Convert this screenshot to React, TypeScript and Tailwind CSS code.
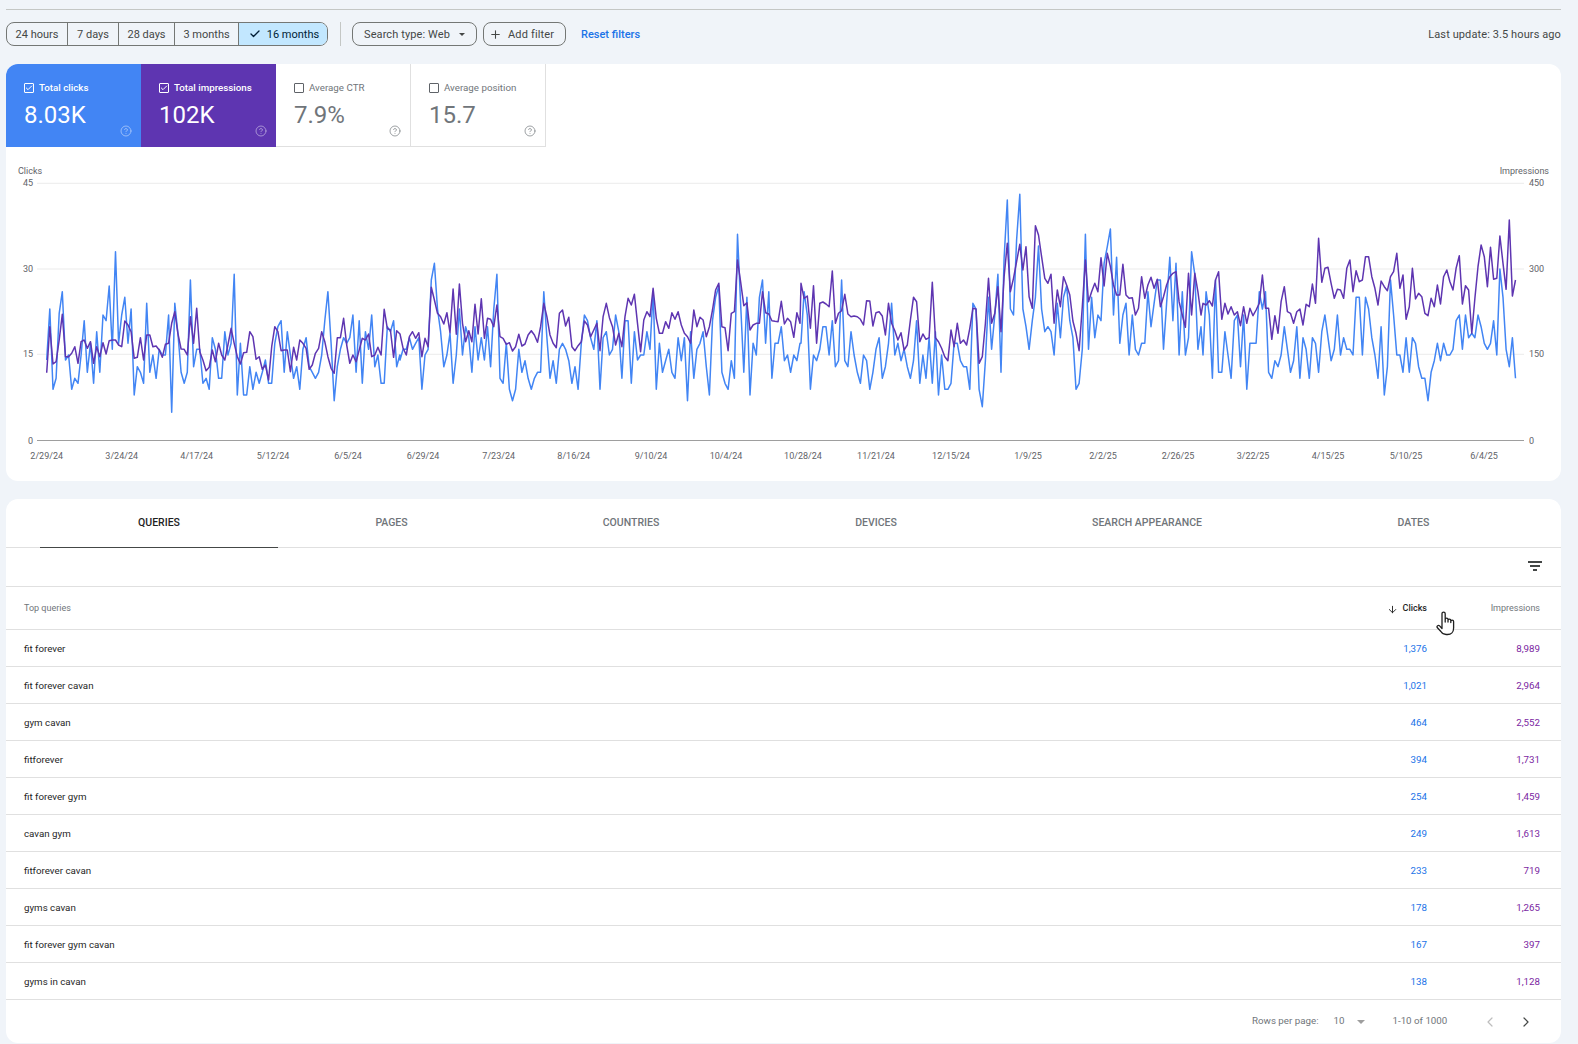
import { Check, ChevronLeft, ChevronRight, CircleHelp, Plus, ArrowDown } from "lucide-react";

const RANGES = ["24 hours", "7 days", "28 days", "3 months"];

const RANGE_WIDTHS = ["w-[61px]", "w-[51px]", "w-[56px]", "w-[64px]"];

const METRICS = [
  { label: "Total clicks", value: "8.03K", bg: "bg-[#4285f4]", active: true },
  { label: "Total impressions", value: "102K", bg: "bg-[#5e35b1]", active: true },
  { label: "Average CTR", value: "7.9%", bg: "bg-white", active: false },
  { label: "Average position", value: "15.7", bg: "bg-white", active: false },
];

const TABS = [
  { label: "QUERIES", width: "w-[238px]" },
  { label: "PAGES", width: "w-[227px]" },
  { label: "COUNTRIES", width: "w-[252px]" },
  { label: "DEVICES", width: "w-[238px]" },
  { label: "SEARCH APPEARANCE", width: "w-[304px]" },
  { label: "DATES", width: "w-[229px]" },
];

const ROWS = [
  ["fit forever", "1,376", "8,989"],
  ["fit forever cavan", "1,021", "2,964"],
  ["gym cavan", "464", "2,552"],
  ["fitforever", "394", "1,731"],
  ["fit forever gym", "254", "1,459"],
  ["cavan gym", "249", "1,613"],
  ["fitforever cavan", "233", "719"],
  ["gyms cavan", "178", "1,265"],
  ["fit forever gym cavan", "167", "397"],
  ["gyms in cavan", "138", "1,128"],
];

const X_LABELS: [string, number][] = [
  ["2/29/24", 46.7], ["3/24/24", 121.7], ["4/17/24", 196.7], ["5/12/24", 273], ["6/5/24", 348],
  ["6/29/24", 423], ["7/23/24", 498.7], ["8/16/24", 573.7], ["9/10/24", 651], ["10/4/24", 726],
  ["10/28/24", 803], ["11/21/24", 876], ["12/15/24", 951], ["1/9/25", 1028], ["2/2/25", 1103],
  ["2/26/25", 1178], ["3/22/25", 1253], ["4/15/25", 1328], ["5/10/25", 1406], ["6/4/25", 1484],
];

const GRID: [number, string, string][] = [
  [183.3, "45", "450"],
  [269, "30", "300"],
  [354.3, "15", "150"],
];

const DAY_STEP = 3.125;

// chart heights, one value per day, 3 units per pixel from y=160. each block restarts at its x
const CLICKS: [number, number[]][] = [
  [46.7, [600,447,688,655,460,395,600,585,688,655,670,585,482,637,550,670,515,637,465,482,378,568,275,550,465,412,550,447,705,620,637,670,430,637,585,655,568,585,585,465,757,430,520,637,670,637,360,620,568,568,670,655,688,533,568,655,655,515,585,550,343,705,550,705,705,620,688,637,670,637,600,670,670,550,500,482,637,515,585,655,620,688,568,533,620,637,655,637,585,482,395,550,722,620,568,533,550,533,465,637,482,670,515,568,465,620,585,670,670,500,515,482,620,585]],
  [400, [600,568,568,533,568,550,533,688,585,568,360,310,447,515,620,585,520,670,585,447,585,500,533,637,500,600,533,600,500,620,447,343,655,670,550,688,722,688,568,637,602,655,688,655,637,637,395,533,655,602,670,568,550,568,602,670,620,688,550,465,482,533,568,482,688,533,515,585,568,465,515,655,482,482,670,515,600,585,585,515,568,395,688,550,637,602,568,637,655,533,602,533,722,515,655,568,550,515,620,705,482,412,378,637,670,688,602,655,223,430,637,412,705,550,585,412,360,550,395,655,550,550,500,602,585,637,585,602,550]],
  [801, [550,395,465,688,585,602,568,500,500,585,482,620,602,360,602,620,515,585,637,670,585,602,688,637,568,533,655,620,550,430,585,550,602,568,620,655,602,482,670,585,655,533,670,515,705,585,688,688,670,550,550,602,620,620,688,430,447,688,740,602,412,568,465,343,637,295,120,447,465,240,103,447,500,568,482,412,258,447,515,500,515,585,430,533,412,378,482,533,688,670,568,223,568,412,533,465,482,310,260,207,465,292,550,465,430,585,465,568,585,550,550,395,500,430,360,360,568,430,292,482,310,585,395,585,533,275,343,568,500]],
  [1203, [585,395,465,655,360,637,637,515,585,655,482,465,620,465,688,550,550,550,395,447,395,637,655,602,620,585,500,568,637,602,500,655,533,568,655,533,550,637,515,465,533,602,568,465,585,533,568,568,585,412,412,585,412,447,533,585,655,500,705,620,360,465,585,585,637,533,637,533,550,620,655,655,722,637,602,550,602,550,585,585,568,482,465,568,465,533,520,533,465,500,550,568,550,482,585,327,412,568,620,533,655]],
];

const IMPRESSIONS: [number, number[]][] = [
  [46.7, [638,500,612,605,540,463,590,590,580,560,610,545,540,565,545,610,560,590,548,582,542,540,540,555,560,483,495,515,595,592,533,600,525,525,560,558,570,592,553,550,490,455,520,567,568,585,470,550,445,575,600,632,622,570,605,550,585,600,555,505,550,590,612,578,577,515,530,598,590,628,615,660,560,500,515,572,570,570,635,562,600,540,550,565,628,615,580,565,515,545,590,625,640,533,533,475,555,610,585,605,570,535,540,522,590,585,562,585,448,505,510,592,512]],
  [400, [522,565,585,530,515,535,518,590,535,560,382,420,460,470,492,458,518,387,523,372,490,545,512,545,433,522,416,535,475,478,500,435,530,535,553,548,573,560,523,558,552,525,512,525,547,500,430,470,525,550,563,460,450,498,472,560,572,557,545,483,495,530,510,490,572,470,430,473,500,555,520,560,470,415,435,403,490,575,480,455,470,385,475,520,520,485,505,458,478,455,495,520,530,550,450,500,472,480,530,500,450,390,370,500,503,572,460,455,300,365,437,428,510,495,490,490,395,458,462,482,484,485,424,492,475,485,532,458,490]],
  [801, [370,415,408,505,377,550,430,426,432,440,333,490,460,452,403,462,470,468,470,478,495,422,423,498,458,455,468,525,430,490,512,540,518,570,555,480,412,425,545,522,538,533,367,533,545,565,590,602,510,560,490,550,540,555,505,445,447,610,590,490,355,490,460,380,515,350,250,395,355,305,253,330,260,410,445,197,225,290,355,370,343,490,390,440,350,375,405,483,520,572,440,300,425,395,370,395,293,378,280,320,375,405,405,313,405,415,413,465,445,350,415,375,352,385,358,440,410,375,350,340,335,425,465,502,340,465,340,395,465]],
  [1203, [430,435,422,438,360,335,478,430,462,440,465,455,497,440,490,445,467,450,430,345,445,445,538,467,520,425,380,455,460,490,455,447,495,433,440,372,430,235,367,325,322,370,415,388,390,415,325,300,395,332,365,360,290,290,350,385,435,363,380,392,350,335,280,385,345,478,440,325,417,400,410,460,467,415,440,375,432,350,330,365,390,325,287,432,377,390,520,415,320,255,290,380,262,358,355,228,310,388,180,408,360]],
];

function toPoints(blocks: [number, number[]][]) {
  return blocks
    .flatMap(([start, ys]) =>
      ys.map((y, i) => `${(start + i * DAY_STEP).toFixed(1)},${(160 + y / 3).toFixed(1)}`),
    )
    .join(" ");
}

function Chart() {
  return (
    <svg viewBox="6 147 1555 334" className="block h-[334px] w-[1555px]">
      <g fontSize="9" fill="#5f6368">
        <text x="18" y="174">Clicks</text>
        <text x="1549" y="174" textAnchor="end">Impressions</text>
        <text x="33" y="444" textAnchor="end">0</text>
        <text x="1529" y="444">0</text>
        {GRID.map(([y, left, right]) => (
          <g key={left}>
            <line x1="37" x2="1524" y1={y} y2={y} stroke="#ebebeb" />
            <text x="33" y={y + 3} textAnchor="end">{left}</text>
            <text x="1529" y={y + 3}>{right}</text>
          </g>
        ))}
        {X_LABELS.map(([label, x]) => (
          <text key={label} x={x} y="459" textAnchor="middle">{label}</text>
        ))}
      </g>
      <line x1="37" x2="1524" y1="440.5" y2="440.5" stroke="#9e9e9e" />
      <polyline points={toPoints(CLICKS)} fill="none" stroke="#4285f4" strokeWidth="1.5" strokeLinejoin="round" />
      <polyline points={toPoints(IMPRESSIONS)} fill="none" stroke="#5e35b1" strokeWidth="1.5" strokeLinejoin="round" />
    </svg>
  );
}

function Metric({ label, value, bg, active }: (typeof METRICS)[number]) {
  return (
    <div
      className={`h-[83px] w-[135px] pl-[18px] pt-[19px] ${bg} ${
        active ? "text-white" : "border-r border-b border-[#e0e0e0] text-[#70757a]"
      }`}
    >
      <div className="flex h-[10px] items-center gap-[5px]">
        <span
          className={`flex h-[10px] w-[10px] items-center justify-center rounded-[1px] border ${
            active ? "border-white" : "border-[#5f6368]"
          }`}
        >
          {active && <Check size={8} strokeWidth={3} />}
        </span>
        <span className={`text-[9.75px] ${active ? "font-medium" : ""}`}>{label}</span>
      </div>
      <div className="mt-[8px] flex h-[36px] justify-between pr-[9px]">
        <span className="text-[24px] leading-[28px]">{value}</span>
        <CircleHelp size={12} strokeWidth={1.5} className={`self-end ${active ? "opacity-60" : "opacity-90"}`} />
      </div>
    </div>
  );
}

export default function App() {
  return (
    <div className="h-[1044px] w-[1578px] overflow-hidden bg-[#f0f4f9] pl-[6px] pr-[17px] [font-family:Roboto,sans-serif]">
      <div className="h-[10px] border-b border-[#c4c7c5]" />

      <div className="mt-[12px] flex h-[24px] items-center text-[11px] text-[#444746]">
        <div className="flex h-full overflow-hidden rounded-[8px] border border-[#747775]">
          {RANGES.map((r, i) => (
            <div key={r} className={`flex items-center justify-center border-r border-[#747775] pt-[2px] ${RANGE_WIDTHS[i]}`}>
              {r}
            </div>
          ))}
          <div className="flex w-[88px] items-center justify-center gap-[6px] bg-[#c2e7ff] pl-[2px] text-[#001d35]">
            <Check size={12} strokeWidth={2.6} />
            <span className="pt-[2px]">16 months</span>
          </div>
        </div>
        <div className="ml-[12px] h-full w-px bg-[#c4c7c5]" />
        <div className="ml-[11px] flex h-full w-[125px] items-center rounded-[8px] border border-[#747775] pl-[11px]">
          <span className="pt-[2px] tracking-[0.1px]">Search type: Web</span>
          <span className="ml-[9px] h-0 w-0 border-x-[3px] border-t-[3px] border-x-transparent border-t-[#444746]" />
        </div>
        <div className="ml-[6px] flex h-full w-[83px] items-center gap-[6px] rounded-[8px] border border-[#747775] pl-[5px]">
          <Plus size={13} strokeWidth={2} />
          <span className="pt-[2px] tracking-[0.15px]">Add filter</span>
        </div>
        <span className="ml-[15px] pt-[2px] font-medium text-[#1a73e8]">Reset filters</span>
        <span className="ml-auto pt-[2px] tracking-[0.1px]">Last update: 3.5 hours ago</span>
      </div>

      <div className="mt-[18px] h-[417px] overflow-hidden rounded-xl bg-white">
        <div className="flex">
          {METRICS.map((m) => (
            <Metric key={m.label} {...m} />
          ))}
        </div>
        <Chart />
      </div>

      <div className="relative mt-[18px] h-[544px] overflow-hidden rounded-xl bg-white text-[9.75px] text-[#1f1f1f]">
        <div className="flex h-[49px] border-b border-[#e0e0e0] pl-[34px] text-[10.5px] font-medium text-[#70757a]">
          {TABS.map((t, i) => (
            <div
              key={t.label}
              className={`flex h-[48px] items-center justify-center ${t.width} ${
                i === 0 ? "h-[49px] border-b border-[#444746] text-[#1f1f1f]" : ""
              }`}
            >
              {t.label}
            </div>
          ))}
        </div>

        <div className="flex h-[39px] items-center justify-end border-b border-[#e0e0e0] pb-[3px] pr-[19px]">
          <svg viewBox="0 0 14 10" className="h-[10px] w-[14px]" fill="#444746">
            <rect width="14" height="2" />
            <rect x="2" y="4" width="10" height="2" />
            <rect x="5" y="8" width="4" height="2" />
          </svg>
        </div>

        <div className="flex h-[43px] items-center border-b border-[#e0e0e0] pl-[18px] pr-[21px] pt-[2px] text-[9px] text-[#70757a]">
          <span className="flex-1">Top queries</span>
          <span className="flex w-[60px] items-center justify-end gap-[5px] font-medium text-[#1f1f1f]">
            <ArrowDown size={11} strokeWidth={2} />
            Clicks
          </span>
          <span className="w-[113px] text-right">Impressions</span>
        </div>

        {ROWS.map(([query, clicks, impressions]) => (
          <div key={query} className="flex h-[37px] items-center border-b border-[#e0e0e0] pl-[18px] pr-[21px] pt-[2px]">
            <span className="flex-1">{query}</span>
            <span className="w-[60px] text-right text-[#1a73e8]">{clicks}</span>
            <span className="w-[113px] text-right text-[#7b1fa2]">{impressions}</span>
          </div>
        ))}

        <div className="flex h-[43px] items-center text-[#70757a]">
          <span className="ml-[1246px]">Rows per page:</span>
          <span className="ml-[15px]">10</span>
          <span className="ml-[13px] h-0 w-0 border-x-[4px] border-t-[4px] border-x-transparent border-t-[#9e9e9e]" />
          <span className="ml-[27px]">1-10 of 1000</span>
          <ChevronLeft size={16} strokeWidth={1.8} className="ml-[35px] text-[#bdbdbd]" />
          <ChevronRight size={16} strokeWidth={1.8} className="ml-[20px] text-[#444746]" />
        </div>

        <svg viewBox="0 0 20 25" className="absolute left-[1430px] top-[112px] h-[25px] w-[20px]" fill="white" stroke="#1f1f1f" strokeWidth="1.3">
          <path d="M6 17.5V2.7a1.6 1.6 0 0 1 3.2 0V11V8.5a1.4 1.4 0 0 1 2.8 0V11V9.5a1.4 1.4 0 0 1 2.8 0V11.5V10.5a1.4 1.4 0 0 1 2.8 0v6.5c0 4-2.5 6.5-6 6.5h-1.5c-2.5 0-4-1-5.2-3L1.2 16.5c-.8-1.4 1.2-2.8 2.4-1.6L6 17.5Z" strokeLinejoin="round" />
        </svg>
      </div>
    </div>
  );
}
